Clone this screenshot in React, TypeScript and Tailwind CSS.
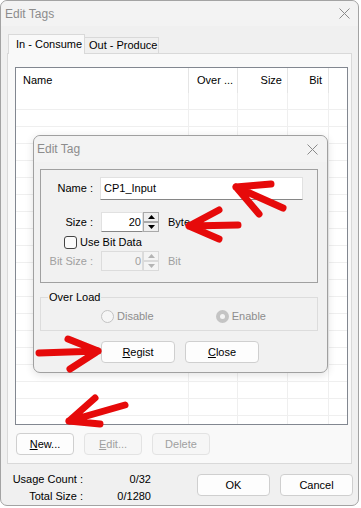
import React from 'react';

function CloseX() {
  return (
    <svg width="11" height="11" viewBox="0 0 11 11">
      <path d="M0.5 0.5L10.5 10.5M10.5 0.5L0.5 10.5" stroke="#8a8a8a" strokeWidth="1" />
    </svg>
  );
}

function Btn({ w, disabled, children }: { w: string; disabled?: boolean; children: React.ReactNode }) {
  return (
    <button
      className={
        disabled
          ? `${w} h-[22px] rounded-[4px] border border-[#e3e3e3] bg-[#f6f6f6] text-[#a0a0a0] text-[11px] leading-none`
          : `${w} h-[22px] rounded-[4px] border border-[#cfcfcf] bg-[#fdfdfd] text-black text-[11px] leading-none`
      }
    >
      {children}
    </button>
  );
}

function Spinner({ disabled }: { disabled?: boolean }) {
  const fill = disabled ? '#b4b4b4' : '#000';
  const box = disabled
    ? 'h-[10px] w-[16px] border border-[#dadada] bg-[#f4f4f4] flex items-center justify-center'
    : 'h-[10px] w-[16px] border border-[#a9a9a9] bg-[#efefef] flex items-center justify-center';
  return (
    <div className="flex flex-col">
      <div className={box}>
        <svg width="7" height="4" viewBox="0 0 7 4">
          <path d="M0 4L3.5 0L7 4Z" fill={fill} />
        </svg>
      </div>
      <div className={box}>
        <svg width="7" height="4" viewBox="0 0 7 4">
          <path d="M0 0L3.5 4L7 0Z" fill={fill} />
        </svg>
      </div>
    </div>
  );
}

const cols = ['w-[173px]', 'w-[49px]', 'w-[50px]', 'w-[41px]'];

export default function App() {
  const rows = Array.from({ length: 20 });

  return (
    <div className="relative w-[361px] h-[508px] bg-white font-['Liberation_Sans',Arial,sans-serif] text-[11px] text-black overflow-hidden">
      {/* main window */}
      <div className="w-[359px] h-[506px] rounded-[7px] border border-[#a3a3a3] bg-[#f0f0f0] flex flex-col">
        <div className="h-[25px] flex items-center justify-between pl-[4px] pr-[8px] bg-[#f3f3f3] rounded-t-[7px]">
          <span className="text-[12px] text-[#8c8c8c]">Edit Tags</span>
          <CloseX />
        </div>

        <div className="px-[6px] pt-[8px]">
          {/* tabs */}
          <div className="flex items-end h-[19px] pl-[1px] relative z-10">
            <div className="w-[77px] h-[20px] -mb-px border border-b-0 border-[#d9d9d9] bg-[#f9f9f9] pl-[7px] flex items-center">
              In - Consume
            </div>
            <div className="w-[74px] h-[16px] border border-l-0 border-b-0 border-[#d9d9d9] bg-[#f0f0f0] pl-[4px] flex items-center">
              Out - Produce
            </div>
          </div>

          {/* tab panel */}
          <div className="w-[345px] h-[411px] border border-[#d9d9d9] bg-[#f9f9f9] pt-[13px]">
            <div className="ml-[7px] w-[333px] h-[358px] border border-[#828790] bg-white overflow-hidden">
              <div className="flex h-[25px]">
                <div className={`${cols[0]} border-r border-[#e5e5e5] pl-[7px] flex items-center`}>Name</div>
                <div className={`${cols[1]} border-r border-[#e5e5e5] pl-[8px] flex items-center`}>Over ...</div>
                <div className={`${cols[2]} border-r border-[#e5e5e5] pr-[5px] flex items-center justify-end`}>Size</div>
                <div className={`${cols[3]} border-r border-[#e5e5e5] pr-[6px] flex items-center justify-end`}>Bit</div>
              </div>
              {rows.map((_, i) => (
                <div key={i} className="flex h-[17px] border-b border-[#efefef]">
                  {cols.map((c) => (
                    <div key={c} className={`${c} border-r border-[#efefef]`} />
                  ))}
                </div>
              ))}
            </div>

            <div className="flex gap-[10px] ml-[8px] mt-[8px]">
              <Btn w="w-[58px]">
                <span className="underline">N</span>ew...
              </Btn>
              <Btn w="w-[58px]" disabled>
                <span className="underline">E</span>dit...
              </Btn>
              <Btn w="w-[58px]" disabled>
                Delete
              </Btn>
            </div>
          </div>

          {/* bottom */}
          <div className="flex items-start">
            <div className="mt-[7px] flex leading-[17px]">
              <div className="w-[76px] text-right">
                <div>Usage Count :</div>
                <div>Total Size :</div>
              </div>
              <div className="w-[68px] text-right">
                <div>0/32</div>
                <div>0/1280</div>
              </div>
            </div>
            <div className="ml-[46px] mt-[10px] flex gap-[10px]">
              <Btn w="w-[73px]">OK</Btn>
              <Btn w="w-[73px]">Cancel</Btn>
            </div>
          </div>
        </div>
      </div>

      {/* Edit Tag dialog over the list */}
      <div className="absolute left-[33px] top-[135px] w-[295px] h-[238px] rounded-[7px] border border-[#a0a0a0] bg-[#f1f1f1] shadow-[0_2px_8px_rgba(0,0,0,0.12)]">
        <div className="h-[26px] flex items-center justify-between pl-[3px] pr-[9px] bg-[#f3f3f3] rounded-t-[7px]">
          <span className="text-[12px] text-[#8c8c8c]">Edit Tag</span>
          <CloseX />
        </div>

        <div className="ml-[6px] mt-[7px] w-[278px] h-[114px] border border-[#a0a0a0] pt-[7px]">
          <div className="flex items-center">
            <div className="w-[52px] text-right">Name :</div>
            <div className="ml-[7px] w-[203px] h-[23px] border border-[#e1e1e1] border-b-[#868686] bg-white pl-[3px] flex items-center">
              CP1_Input
            </div>
          </div>

          <div className="flex items-center mt-[12px]">
            <div className="w-[52px] text-right">Size :</div>
            <div className="ml-[8px] w-[42px] h-[20px] border border-[#e1e1e1] border-b-[#868686] bg-white pr-[1px] flex items-center justify-end">
              20
            </div>
            <Spinner />
            <span className="ml-[9px]">Byte</span>
          </div>

          <div className="flex items-center mt-[4px] h-[13px]">
            <div className="ml-[23px] w-[13px] h-[13px] rounded-[3px] border border-[#444] bg-[#fbfbfb]" />
            <span className="ml-[3px]">Use Bit Data</span>
          </div>

          <div className="flex items-center mt-[2px] text-[#a0a0a0]">
            <div className="w-[52px] text-right">Bit Size :</div>
            <div className="ml-[8px] w-[42px] h-[20px] border border-[#dcdcdc] bg-[#f3f3f3] pr-[1px] flex items-center justify-end">
              0
            </div>
            <Spinner disabled />
            <span className="ml-[9px]">Bit</span>
          </div>
        </div>

        <fieldset className="ml-[6px] mt-[8px] w-[278px] h-[40px] border border-[#dcdcdc]">
          <legend className="ml-[7px] px-[1px] leading-[13px]">Over Load</legend>
          <div className="flex items-center mt-[4px] text-[#8d8d8d]">
            <div className="ml-[60px] w-[13px] h-[13px] rounded-full border border-[#c3c3c3] bg-[#f6f6f6]" />
            <span className="ml-[3px]">Disable</span>
            <div className="ml-[62px] w-[13px] h-[13px] rounded-full bg-[#c4c4c4] flex items-center justify-center">
              <div className="w-[5px] h-[5px] rounded-full bg-[#f4f4f4]" />
            </div>
            <span className="ml-[3px]">Enable</span>
          </div>
        </fieldset>

        <div className="flex gap-[10px] ml-[67px] mt-[10px]">
          <Btn w="w-[74px]">
            <span className="underline">R</span>egist
          </Btn>
          <Btn w="w-[74px]">
            <span className="underline">C</span>lose
          </Btn>
        </div>
      </div>

      {/* red annotation arrows */}
      <svg className="absolute inset-0 pointer-events-none" width="361" height="508" viewBox="0 0 361 508">
        <g stroke="#e60a0a" strokeWidth="7" strokeLinecap="round" strokeLinejoin="round" fill="#e60a0a">
          <path d="M283 208L236 187M236 187L271 184M236 187L259 214" />
          <path d="M238 225L189 226M189 226L219 210M189 226L219 239" />
          <path d="M39 353L98 351M98 351L68 339M98 351L70 369" />
          <path d="M125 405L69 421M69 421L95 398M69 421L100 424" />
        </g>
      </svg>
    </div>
  );
}
